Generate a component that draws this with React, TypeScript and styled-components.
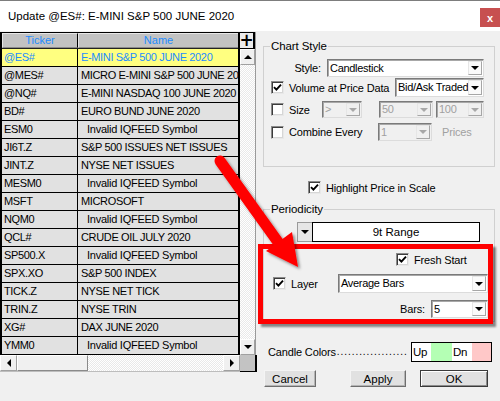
import React from 'react';
import styled, { createGlobalStyle } from 'styled-components';

const Global = createGlobalStyle`
  html, body { margin: 0; padding: 0; background: #f0f0f0; }
  body { font-family: "Liberation Sans", Arial, sans-serif; font-size: 11px; color: #000; }
  * { box-sizing: border-box; }
`;

const Window = styled.div`
  position: relative;
  width: 500px;
  height: 401px;
  overflow: hidden;
  background: #f0f0f0;
  display: flex;
  flex-direction: column;
`;

const TitleBar = styled.div`
  height: 31px;
  flex: none;
  background: #fff;
  border-top: 1px solid #7d7d7d;
  display: flex;
  align-items: flex-start;
  justify-content: space-between;
`;

const Title = styled.div`
  font-family: "Liberation Sans", Arial, sans-serif;
  font-size: 11.5px;
  line-height: 16px;
  margin: 7px 0 0 8px;
  white-space: nowrap;
`;

const CloseBtn = styled.div`
  width: 20px;
  height: 19px;
  margin-top: 7px;
  background: #c75050;
  color: #fff;
  font: bold 11px "Liberation Sans", Arial, sans-serif;
  display: flex;
  align-items: center;
  justify-content: center;
`;

const Body = styled.div`
  flex: 1;
  display: flex;
  min-width: 0;
`;

const LeftPane = styled.div`
  width: 257px;
  flex: none;
  margin-top: 1px;
  display: flex;
  flex-direction: column;
`;

const GridRow = styled.div`
  display: flex;
`;

const Table = styled.div`
  width: 240px;
  border-left: 2px solid #000;
  border-right: 2px solid #000;
  display: flex;
  flex-direction: column;
`;

const HeaderRow = styled.div`
  display: grid;
  grid-template-columns: 76px 160px;
  height: 17px;
  border-top: 1px solid #000;
  border-bottom: 1px solid #222;
`;

const HeaderCell = styled.div`
  background: #c2c2c2;
  border-top: 1px solid #e6e6e6;
  border-left: 1px solid #e6e6e6;
  border-right: 1px solid #000;
  border-bottom: 1px solid #8a8a8a;
  color: #1e8cff;
  font-size: 11px;
  line-height: 13px;
  text-align: center;
  &:last-child { border-right: 0; }
`;

const DataRow = styled.div<{ $sel?: boolean }>`
  display: grid;
  grid-template-columns: 76px 160px;
  height: 18px;
  border-bottom: 1px solid #000;
  background: ${p => (p.$sel ? '#ffff80' : '#e1e1e1')};
  color: ${p => (p.$sel ? '#1e8cff' : '#000')};
`;

const Cell = styled.div<{ $indent?: number; $invalid?: boolean }>`
  padding-left: ${p => p.$indent ?? 2}px;
  border-right: 1px solid #000;
  line-height: 17px;
  white-space: nowrap;
  overflow: hidden;
  font-size: 11px;
  letter-spacing: ${p => (p.$invalid ? '-0.25px' : '-0.35px')};
  &:last-child { border-right: 0; }
`;

const VScroll = styled.div`
  width: 16px;
  display: flex;
  flex-direction: column;
  border-right: 1px solid #9a9a9a;
`;

const PlusBtn = styled.div`
  height: 17px;
  background: #ececec;
  border: 1px solid #000;
  border-left: 0;
  border-right-width: 2px;
  display: flex;
  align-items: center;
  justify-content: center;
  font: bold 17px "DejaVu Sans", sans-serif;
  line-height: 1;
`;

const ArrowBtn = styled.div<{ $w?: number }>`
  flex: none;
  width: ${p => (p.$w ? `${p.$w}px` : 'auto')};
  height: 16px;
  background: #f0f0f0;
  border: 1px solid;
  border-color: #fff #a0a0a0 #a0a0a0 #fff;
  display: flex;
  align-items: center;
  justify-content: center;
`;

const Track = styled.div`
  flex: 1;
  background: repeating-conic-gradient(#ffffff 0 25%, #e9e9e9 0 50%) 0 0 / 2px 2px;
`;

const HScroll = styled.div`
  display: flex;
  height: 17px;
`;

const HBar = styled.div`
  width: 240px;
  display: flex;
  border-bottom: 1px solid #bdbdbd;
`;

const Thumb = styled.div`
  width: 71px;
  background: #f0f0f0;
  border: 1px solid;
  border-color: #fff #8a8a8a #8a8a8a #fff;
`;

const Corner = styled.div`
  width: 17px;
  background: #c3c3c3;
  border-right: 2px solid #000;
  border-bottom: 1px solid #000;
`;

const Tri = styled.span<{ $dir: 'up' | 'down' | 'left' | 'right'; $gray?: boolean }>`
  width: 0;
  height: 0;
  border-style: solid;
  ${p => {
    const c = p.$gray ? '#a8a8a8' : '#000';
    switch (p.$dir) {
      case 'up':
        return `border-width: 0 4px 4px 4px; border-color: transparent transparent ${c} transparent;`;
      case 'down':
        return `border-width: 4px 4px 0 4px; border-color: ${c} transparent transparent transparent;`;
      case 'left':
        return `border-width: 4px 4px 4px 0; border-color: transparent ${c} transparent transparent;`;
      default:
        return `border-width: 4px 0 4px 4px; border-color: transparent transparent transparent ${c};`;
    }
  }}
`;

const RightPane = styled.div`
  flex: 1;
  min-width: 0;
  padding: 8px 5px 0 6px;
  display: flex;
  flex-direction: column;
`;

const Group = styled.fieldset<{ $pb?: number; $mt?: number }>`
  margin: ${p => p.$mt ?? 0}px 0 0 0;
  padding: 6px 10px ${p => p.$pb ?? 0}px 7px;
  border: 1px solid #d0d0d0;
  min-width: 0;
`;

const Legend = styled.legend`
  padding: 0 1px;
  margin-left: -1px;
  font-size: 11.5px;
  line-height: 14px;
  letter-spacing: -0.1px;
`;

const Row = styled.div<{ $h: number; $mt?: number; $ml?: number; $end?: boolean }>`
  display: flex;
  align-items: center;
  height: ${p => p.$h}px;
  margin-top: ${p => p.$mt ?? 0}px;
  margin-left: ${p => p.$ml ?? 0}px;
  justify-content: ${p => (p.$end ? 'flex-end' : 'flex-start')};
`;

const Label = styled.span<{ $w?: number; $gray?: boolean; $ml?: number }>`
  font-size: 11px;
  white-space: nowrap;
  color: ${p => (p.$gray ? '#a0a0a0' : '#000')};
  ${p => (p.$w ? `width: ${p.$w}px; text-align: right;` : '')}
  margin-left: ${p => p.$ml ?? 0}px;
  letter-spacing: -0.15px;
`;

const CheckWrap = styled.label<{ $ml?: number; $w?: number }>`
  display: flex;
  align-items: center;
  gap: 5px;
  flex: none;
  width: ${p => (p.$w ? `${p.$w}px` : 'auto')};
  margin-left: ${p => p.$ml ?? 0}px;
`;

const Box = styled.span`
  width: 13px;
  height: 13px;
  flex: none;
  background: #fff;
  border: 1px solid;
  border-color: #8a8a8a #e8e8e8 #e8e8e8 #8a8a8a;
  box-shadow: inset 1px 1px 0 #3c3c3c, inset -1px -1px 0 #d6d6d6;
  display: flex;
  align-items: center;
  justify-content: center;
`;

const Sel = styled.div<{ $w: number; $h?: number; $ml?: number; $auto?: boolean; $disabled?: boolean }>`
  width: ${p => p.$w}px;
  height: ${p => p.$h ?? 18}px;
  flex: none;
  margin-left: ${p => (p.$auto ? 'auto' : `${p.$ml ?? 0}px`)};
  display: flex;
  align-items: stretch;
  background: ${p => (p.$disabled ? '#f0f0f0' : '#fff')};
  border: 1px solid;
  border-color: #7a7a7a #dcdcdc #dcdcdc #7a7a7a;
  box-shadow: inset 1px 1px 0 #a8a8a8;
  color: ${p => (p.$disabled ? '#a0a0a0' : '#000')};
`;

const SelText = styled.span`
  flex: 1;
  min-width: 0;
  padding: 0 0 0 2px;
  font-size: 11px;
  letter-spacing: -0.3px;
  line-height: 15px;
  align-self: center;
  white-space: nowrap;
  overflow: hidden;
`;

const DropBtn = styled.span<{ $disabled?: boolean }>`
  width: 14px;
  flex: none;
  margin: 1px 1px 1px 0;
  background: ${p => (p.$disabled ? '#f0f0f0' : '#fafafa')};
  border: 1px solid;
  border-color: #e6e6e6 #a6a6a6 #a6a6a6 #e6e6e6;
  display: flex;
  align-items: center;
  justify-content: center;
`;

const PeriodBtn = styled.div`
  width: 15px;
  height: 20px;
  background: #e6e6e6;
  border: 1px solid #9a9a9a;
  border-right: 0;
  display: flex;
  align-items: center;
  justify-content: center;
`;

const PeriodField = styled.div`
  width: 168px;
  height: 20px;
  background: #fff;
  border: 1px solid #000;
  display: flex;
  align-items: center;
  justify-content: center;
  font-size: 11.5px;
`;

const RedBox = styled.div`
  margin: 2px -9px -3px -13px;
  height: 80px;
  border: 5px solid #ff0000;
  box-shadow: 3px 3px 2px rgba(0, 0, 0, 0.45);
  padding: 4px 0 1px 0;
  display: flex;
  flex-direction: column;
  position: relative;
`;

const CandleRow = styled.div`
  display: flex;
  align-items: center;
  height: 20px;
  margin: 20px 3px 0 5px;
`;

const Dots = styled.span`
  flex: 1;
  min-width: 0;
  white-space: nowrap;
  font-size: 10px;
  letter-spacing: 0.95px;
  color: #000;
  align-self: flex-end;
  line-height: 14px;
  padding: 0 0 3px 1px;
`;

const Swatches = styled.div`
  display: flex;
  flex: none;
  height: 20px;
  border: 1px solid #000;
  margin-left: 3px;
`;

const Swatch = styled.div<{ $bg: string; $w: number }>`
  width: ${p => p.$w}px;
  background: ${p => p.$bg};
  font-size: 11.5px;
  line-height: 18px;
  padding-left: 1px;
  letter-spacing: -0.4px;
  overflow: hidden;
`;

const ButtonRow = styled.div`
  display: flex;
  margin: 8px 0 0 1px;
`;

const Btn = styled.div<{ $w: number; $ml?: number; $def?: boolean }>`
  width: ${p => p.$w}px;
  height: 17px;
  margin-left: ${p => p.$ml ?? 0}px;
  background: #e1e1e1;
  border: 1px solid;
  border-color: ${p => (p.$def ? '#3a3a3a' : '#f4f4f4 #6e6e6e #6e6e6e #f4f4f4')};
  box-shadow: ${p => (p.$def ? 'inset 1px 1px 0 #fff, inset -1px -1px 0 #8c8c8c' : 'inset -1px -1px 0 #b4b4b4')};
  font-size: 11.5px;
  display: flex;
  align-items: center;
  justify-content: center;
`;

const Overlay = styled.svg`
  position: absolute;
  left: 0;
  top: 0;
  pointer-events: none;
`;

const Check = () => (
  <svg width="9" height="9" viewBox="0 0 9 9">
    <path d="M1 4.2 L3.4 6.6 L8 1.6" fill="none" stroke="#000" strokeWidth="1.9" />
  </svg>
);

const CheckBox = ({ checked, label, ml, w }: { checked?: boolean; label: string; ml?: number; w?: number }) => (
  <CheckWrap $ml={ml} $w={w}>
    <Box>{checked && <Check />}</Box>
    <Label>{label}</Label>
  </CheckWrap>
);

const Select = ({
  w, h, ml, auto, disabled, text,
}: { w: number; h?: number; ml?: number; auto?: boolean; disabled?: boolean; text: string }) => (
  <Sel $w={w} $h={h} $ml={ml} $auto={auto} $disabled={disabled}>
    <SelText>{text}</SelText>
    <DropBtn $disabled={disabled}>
      <Tri $dir="down" $gray={disabled} />
    </DropBtn>
  </Sel>
);

type RowData = { t: string; n: string; invalid?: boolean };
const INVALID = 'Invalid IQFEED Symbol';
const rows: RowData[] = [
  { t: '@ES#', n: 'E-MINI S&P 500 JUNE 2020' },
  { t: '@MES#', n: 'MICRO E-MINI S&P 500 JUNE 2020' },
  { t: '@NQ#', n: 'E-MINI NASDAQ 100 JUNE 2020' },
  { t: 'BD#', n: 'EURO BUND JUNE 2020' },
  { t: 'ESM0', n: INVALID, invalid: true },
  { t: 'JI6T.Z', n: 'S&P 500 ISSUES NET ISSUES' },
  { t: 'JINT.Z', n: 'NYSE NET ISSUES' },
  { t: 'MESM0', n: INVALID, invalid: true },
  { t: 'MSFT', n: 'MICROSOFT' },
  { t: 'NQM0', n: INVALID, invalid: true },
  { t: 'QCL#', n: 'CRUDE OIL JULY 2020' },
  { t: 'SP500.X', n: INVALID, invalid: true },
  { t: 'SPX.XO', n: 'S&P 500 INDEX' },
  { t: 'TICK.Z', n: 'NYSE NET TICK' },
  { t: 'TRIN.Z', n: 'NYSE TRIN' },
  { t: 'XG#', n: 'DAX JUNE 2020' },
  { t: 'YMM0', n: INVALID, invalid: true },
];

export default function App() {
  return (
    <Window>
      <Global />
      <TitleBar>
        <Title>Update @ES#: E-MINI S&amp;P 500 JUNE 2020</Title>
        <CloseBtn>x</CloseBtn>
      </TitleBar>
      <Body>
        <LeftPane>
          <GridRow>
            <Table>
              <HeaderRow>
                <HeaderCell>Ticker</HeaderCell>
                <HeaderCell>Name</HeaderCell>
              </HeaderRow>
              {rows.map((r, i) => (
                <DataRow key={r.t} $sel={i === 0}>
                  <Cell $indent={2}>{r.t}</Cell>
                  <Cell $indent={r.invalid ? 9 : 3} $invalid={r.invalid}>{r.n}</Cell>
                </DataRow>
              ))}
            </Table>
            <VScroll>
              <PlusBtn>+</PlusBtn>
              <ArrowBtn><Tri $dir="up" /></ArrowBtn>
              <Track />
              <ArrowBtn><Tri $dir="down" /></ArrowBtn>
            </VScroll>
          </GridRow>
          <HScroll>
            <HBar>
              <ArrowBtn $w={17}><Tri $dir="left" /></ArrowBtn>
              <Thumb />
              <Track />
              <ArrowBtn $w={17}><Tri $dir="right" /></ArrowBtn>
            </HBar>
            <Corner />
          </HScroll>
        </LeftPane>
        <RightPane>
          <Group $pb={25}>
            <Legend>Chart Style</Legend>
            <Row $h={18}>
              <Label $w={50}>Style:</Label>
              <Select w={157} ml={6} text="Candlestick" />
            </Row>
            <Row $h={19} $mt={1}>
              <CheckBox checked label="Volume at Price Data" w={124} />
              <Select w={89} h={19} auto text="Bid/Ask Traded" />
            </Row>
            <Row $h={17} $mt={4}>
              <CheckBox label="Size" w={51} />
              <Select w={40} h={17} disabled text=">" />
              <Select w={54} h={17} ml={17} disabled text="50" />
              <Select w={48} h={17} ml={3} disabled text="100" />
            </Row>
            <Row $h={18} $mt={5}>
              <CheckBox label="Combine Every" w={107} />
              <Select w={54} disabled text="1" />
              <Label $gray $ml={10}>Prices</Label>
            </Row>
          </Group>
          <Row $h={13} $mt={14} $ml={45}>
            <CheckBox checked label="Highlight Price in Scale" />
          </Row>
          <Group $pb={0} $mt={8}>
            <Legend>Periodicity</Legend>
            <Row $h={20} $ml={26}>
              <PeriodBtn><Tri $dir="down" /></PeriodBtn>
              <PeriodField>9t Range</PeriodField>
            </Row>
            <RedBox>
              <Row $h={13} $ml={133}>
                <CheckBox checked label="Fresh Start" />
              </Row>
              <Row $h={19} $mt={8} $ml={10}>
                <CheckBox checked label="Layer" />
                <Select w={150} h={19} auto text="Average Bars" />
              </Row>
              <Row $h={18} $mt={7} $end>
                <Label>Bars:</Label>
                <Select w={57} ml={6} text="5" />
              </Row>
            </RedBox>
          </Group>
          <CandleRow>
            <Label>Candle Colors</Label>
            <Dots>{'.'.repeat(19)}</Dots>
            <Swatches>
              <Swatch $bg="#fff" $w={19}>Up</Swatch>
              <Swatch $bg="#b4ffb4" $w={21} />
              <Swatch $bg="#fff" $w={20}>Dn</Swatch>
              <Swatch $bg="#ffc8c8" $w={19} />
            </Swatches>
          </CandleRow>
          <ButtonRow>
            <Btn $w={52}>Cancel</Btn>
            <Btn $w={56} $ml={34}>Apply</Btn>
            <Btn $w={68} $ml={14} $def>OK</Btn>
          </ButtonRow>
        </RightPane>
      </Body>
      <Overlay width="500" height="401" viewBox="0 0 500 401">
        <defs>
          <filter id="sh" x="-20%" y="-20%" width="140%" height="140%">
            <feDropShadow dx="2" dy="2" stdDeviation="1.5" floodColor="#000" floodOpacity="0.45" />
          </filter>
        </defs>
        <g filter="url(#sh)" fill="#ff0000">
          <path d="M220 161 L283 249" stroke="#ff0000" strokeWidth="11" strokeLinecap="round" fill="none" />
          <polygon points="298,267 266,251 292,232" />
        </g>
      </Overlay>
    </Window>
  );
}
